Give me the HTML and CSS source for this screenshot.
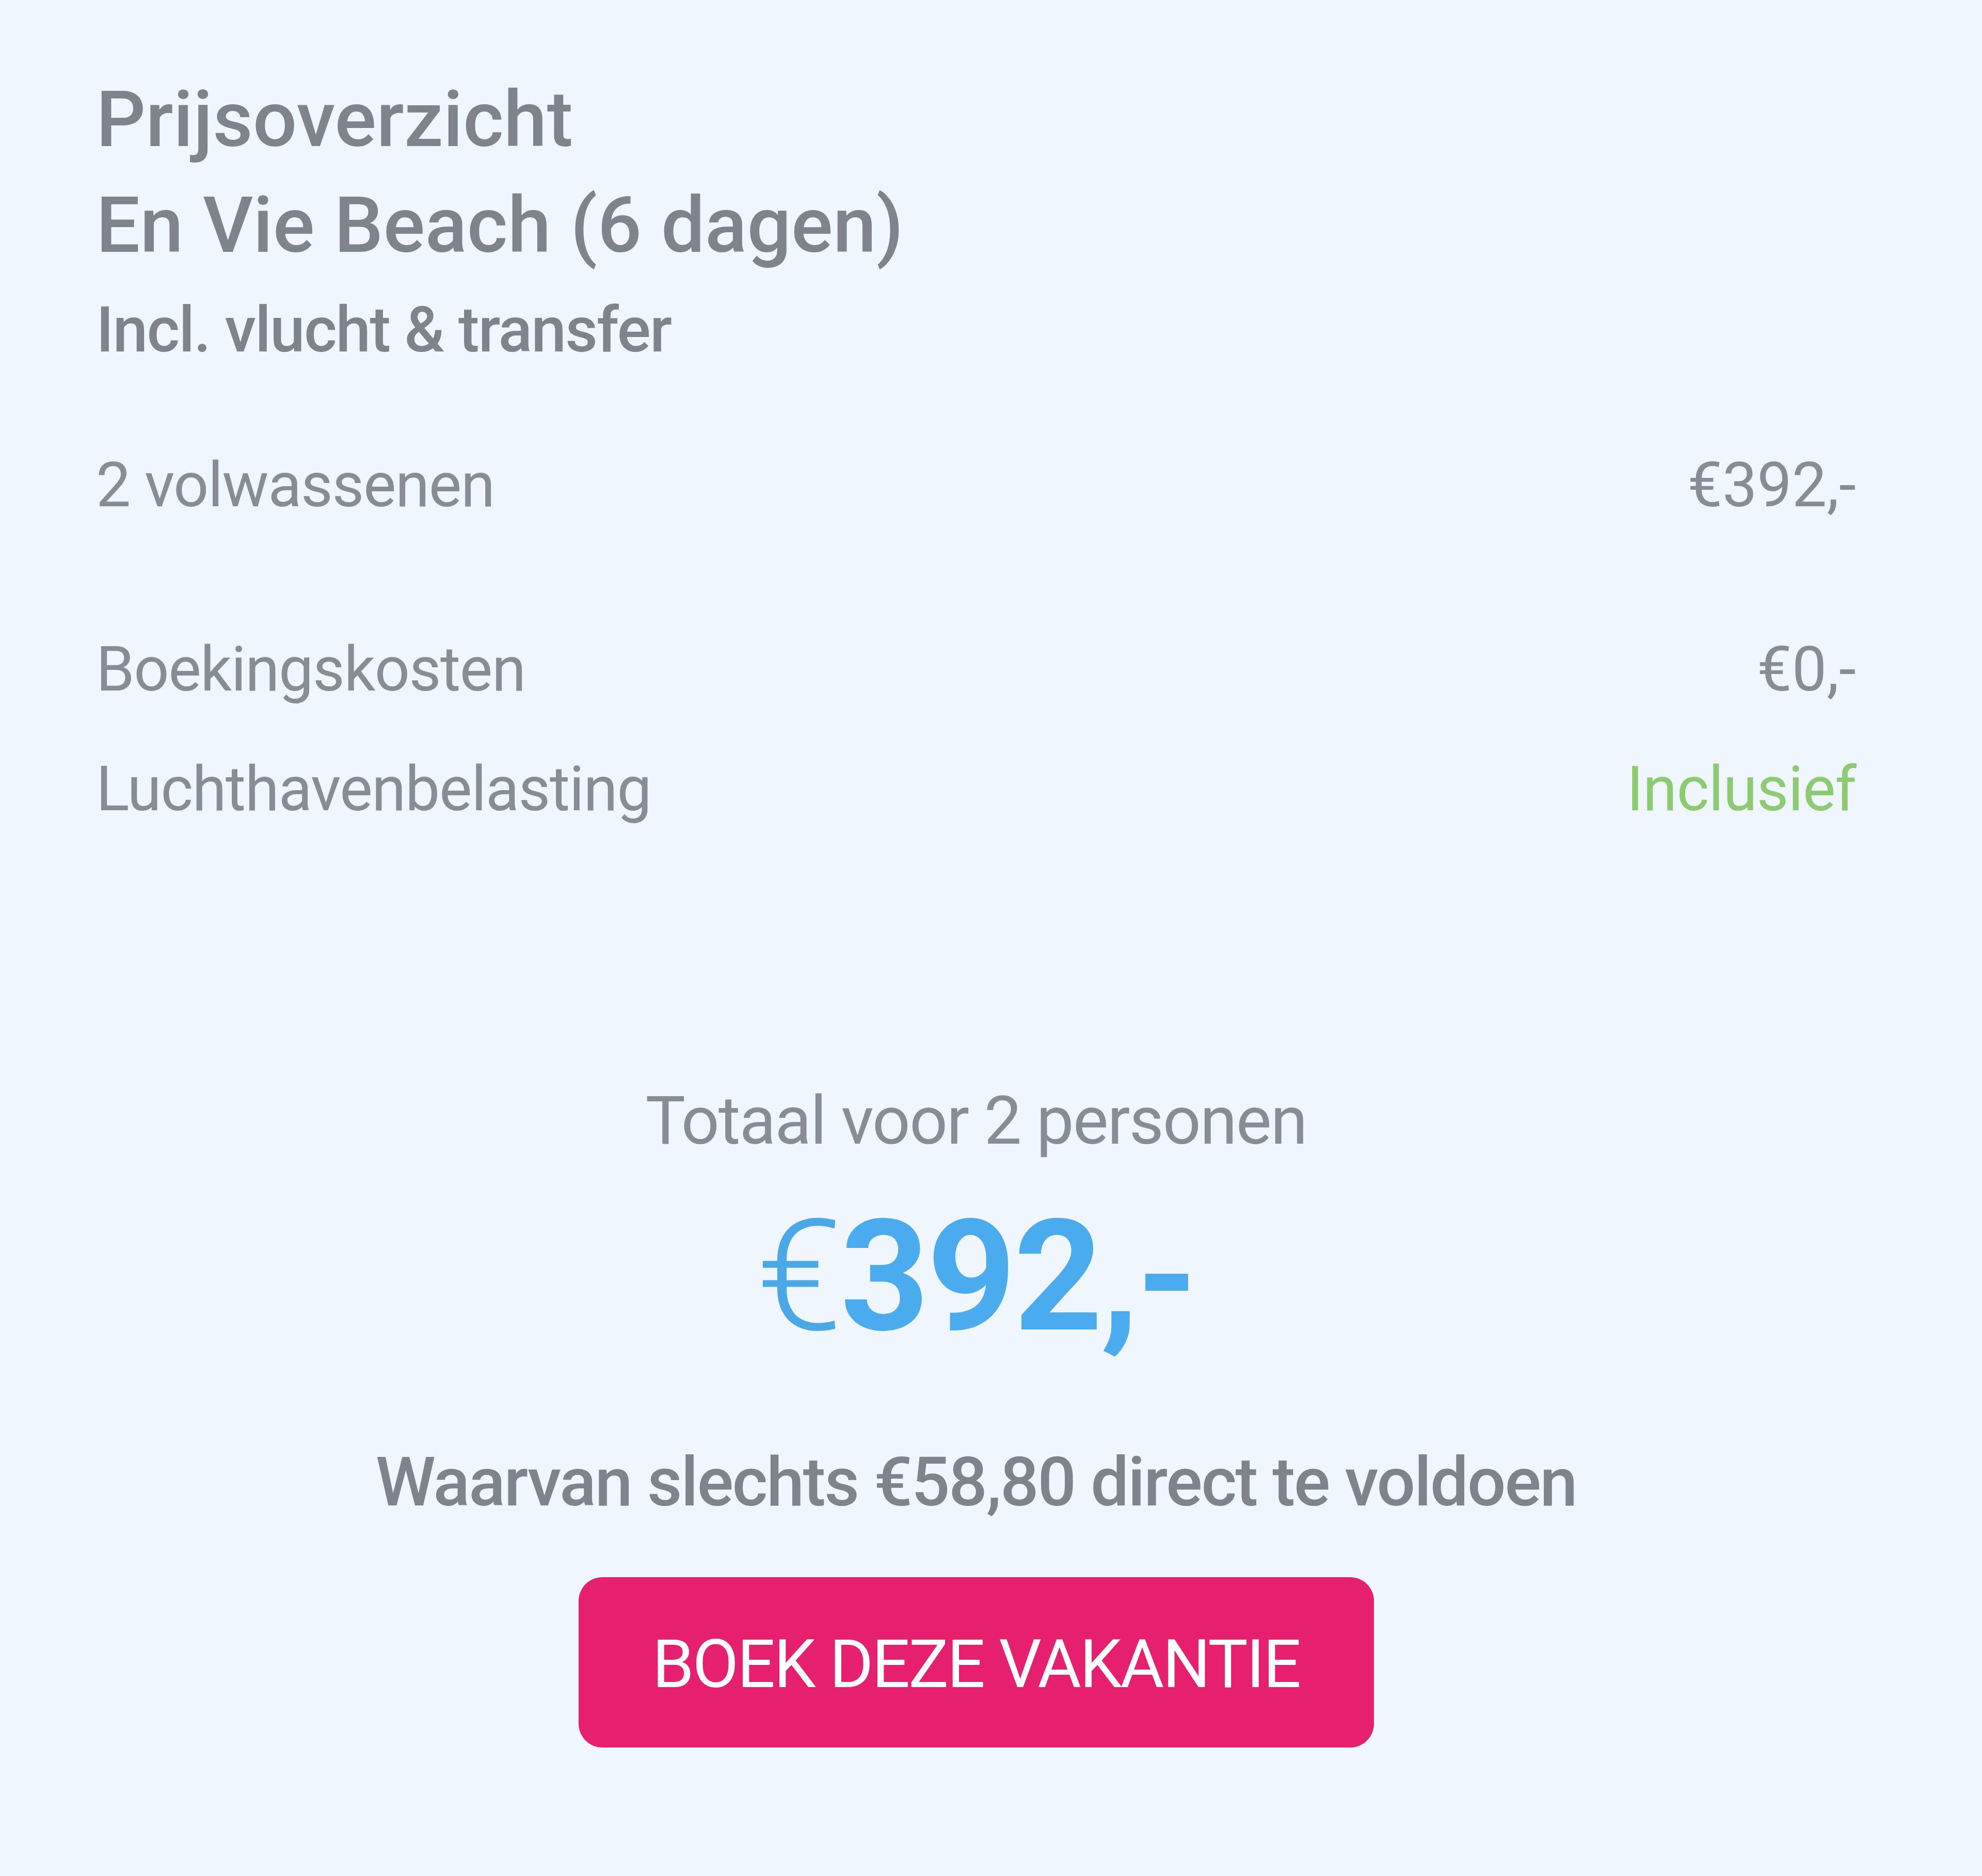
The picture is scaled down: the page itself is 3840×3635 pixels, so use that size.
FILE: index.html
```html
<!DOCTYPE html>
<html lang="nl">
<head>
<meta charset="utf-8">
<title>Prijsoverzicht</title>
<link rel="stylesheet" href="styles.css">
</head>
<body>
<main class="summary">
  <h1 class="title">Prijsoverzicht<br>En Vie Beach (6 dagen)</h1>
  <p class="subtitle">Incl. vlucht &amp; transfer</p>

  <div class="row row-first">
    <span class="label">2 volwassenen</span>
    <span class="value">€392,-</span>
  </div>
  <div class="row row-second">
    <span class="label">Boekingskosten</span>
    <span class="value">€0,-</span>
  </div>
  <div class="row row-third">
    <span class="label">Luchthavenbelasting</span>
    <span class="value value-green">Inclusief</span>
  </div>

  <section class="total">
    <p class="total-label">Totaal voor 2 personen</p>
    <p class="total-price"><span class="euro">€</span>392,-</p>
    <p class="deposit">Waarvan slechts €58,80 direct te voldoen</p>
    <button class="book" type="button">BOEK DEZE VAKANTIE</button>
  </section>
</main>
</body>
</html>
```

FILE: styles.css
```css
html, body {
  margin: 0;
  padding: 0;
  background: #f0f6fd;
}

body {
  font-family: Roboto, "Noto Sans", "Liberation Sans", sans-serif;
  color: #7c818a;
}

.summary {
  padding: 129px 244px 150px 186px;
  display: flex;
  flex-direction: column;
}

.title {
  margin: 0;
  font-size: 151px;
  line-height: 205px;
  font-weight: 500;
  color: #7e838c;
}

.subtitle {
  margin: 28px 0 0;
  font-size: 122px;
  line-height: 1.2;
  font-weight: 500;
  letter-spacing: -2px;
  color: #7e838c;
}

.row {
  display: flex;
  justify-content: space-between;
  align-items: baseline;
  font-size: 120px;
  line-height: 1.2;
  font-weight: 400;
  color: #878c95;
}

.label {
  letter-spacing: -1.5px;
}

.row-first { margin-top: 155px; }
.row-second { margin-top: 213px; }
.row-third { margin-top: 88px; }

.value-green {
  color: #8dcb72;
  letter-spacing: -1px;
}

.total {
  display: flex;
  flex-direction: column;
  align-items: center;
  margin-top: 493px;
}

.total-label {
  margin: 0;
  font-size: 130px;
  line-height: 1.2;
  font-weight: 400;
  letter-spacing: -2px;
  color: #878c95;
}

.total-price {
  margin: 59px 0 0;
  font-size: 300px;
  line-height: 1.1;
  font-weight: 700;
  color: #4aacee;
  letter-spacing: -4px;
}

.euro {
  font-weight: 300;
  color: #4ba8e6;
}

.deposit {
  margin: 154px 0 0;
  font-size: 132px;
  line-height: 1.2;
  font-weight: 500;
  letter-spacing: -2.5px;
  color: #7e838c;
}

.book {
  margin-top: 104px;
  width: 1541px;
  height: 330px;
  padding: 8px 0 0;
  border: none;
  border-radius: 46px;
  background: #e6206f;
  color: #ffffff;
  font-family: Roboto, "Noto Sans", "Liberation Sans", sans-serif;
  font-size: 130px;
  font-weight: 400;
  letter-spacing: -3px;
  display: flex;
  align-items: center;
  justify-content: center;
}
```
